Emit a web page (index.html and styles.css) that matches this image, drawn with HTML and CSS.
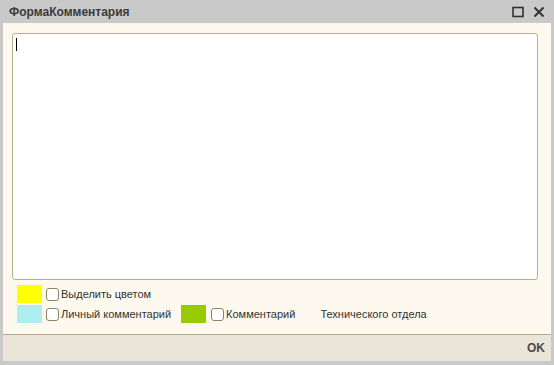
FILE: index.html
```html
<!DOCTYPE html>
<html lang="ru">
<head>
    <meta charset="UTF-8">
    <title>ФормаКомментария</title>
    <link rel="stylesheet" href="styles.css">
</head>
<body>
    <div class="window">
        <div class="title-bar">
            <span class="title">ФормаКомментария</span>
            <div class="title-buttons">
                <svg width="12" height="12" viewBox="0 0 12 12"><rect x="1" y="1.5" width="10" height="9" fill="none" stroke="#333" stroke-width="1.6"/></svg>
                <svg width="12" height="12" viewBox="0 0 12 12"><path d="M1.5 1.5 L10.5 10.5 M10.5 1.5 L1.5 10.5" stroke="#333" stroke-width="2"/></svg>
            </div>
        </div>
        <div class="content">
            <div class="editor"><span class="caret"></span></div>
            <div class="options">
                <div class="option-row">
                    <span class="swatch yellow"></span>
                    <label class="check"><span class="box"></span>Выделить цветом</label>
                </div>
                <div class="option-row">
                    <span class="swatch cyan"></span>
                    <label class="check"><span class="box"></span>Личный комментарий</label>
                    <span class="swatch green"></span>
                    <label class="check check-wide"><span class="box"></span>Комментарий</label>
                    <span class="dept">Технического отдела</span>
                </div>
            </div>
        </div>
        <div class="footer">
            <span class="ok">OK</span>
        </div>
    </div>
</body>
</html>
```

FILE: styles.css
```css
body {
    margin: 0;
    font-family: Arial, "Liberation Sans", sans-serif;
    background: #c9c9c9;
}
.window {
    width: 554px;
    height: 365px;
    box-sizing: border-box;
    padding: 0 3px 4px 3px;
    display: flex;
    flex-direction: column;
    background: #c9c9c9;
}
.title-bar {
    height: 23px;
    display: flex;
    align-items: center;
    justify-content: space-between;
}
.title {
    margin-left: 6px;
    font-size: 12px;
    font-weight: bold;
    color: #3a3a3a;
}
.title-buttons {
    display: flex;
    gap: 9px;
    margin-right: 6px;
}
.content {
    flex: 1;
    background: #fdf9ee;
    padding: 10px 13px 0 9px;
    display: flex;
    flex-direction: column;
}
.editor {
    height: 245px;
    background: #ffffff;
    border: 1px solid #b9ae8a;
    border-radius: 3px;
    position: relative;
}
.caret {
    position: absolute;
    left: 3px;
    top: 4px;
    width: 1px;
    height: 13px;
    background: #000;
}
.options {
    padding: 5px 0 0 5px;
    display: flex;
    flex-direction: column;
    gap: 2px;
}
.option-row {
    display: flex;
    align-items: center;
    height: 18px;
    font-size: 11px;
    color: #333;
}
.swatch {
    width: 25px;
    height: 18px;
}
.yellow { background: #ffff00; }
.cyan { background: #afeeee; }
.green { background: #99cc00; margin-left: 10px; }
.check {
    display: flex;
    align-items: center;
    margin-left: 4px;
}
.check-wide {
    margin-left: 5px;
}
.box {
    width: 11px;
    height: 11px;
    border: 1px solid #8c8466;
    border-radius: 3px;
    background: #fff;
    margin-right: 2px;
}
.dept {
    margin-left: 25px;
}
.footer {
    height: 26px;
    background: #ebe5d9;
    border-top: 1px solid #b3ab84;
    display: flex;
    align-items: center;
    justify-content: flex-end;
    padding-right: 6px;
}
.ok {
    font-size: 12px;
    font-weight: bold;
    color: #4a4a4a;
}
```
